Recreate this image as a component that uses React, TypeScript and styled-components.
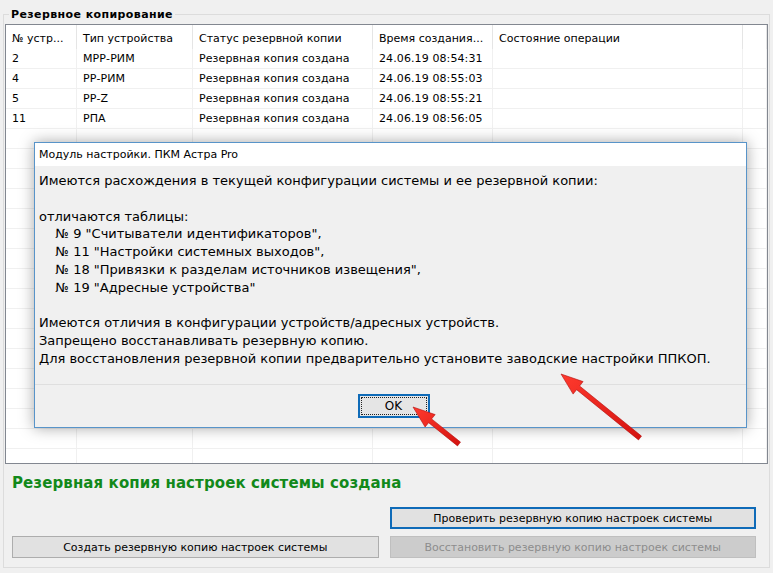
import React from 'react';
import styled, { createGlobalStyle } from 'styled-components';

const GlobalStyle = createGlobalStyle`
  html, body {
    margin: 0;
    padding: 0;
    background: #f0f0f0;
  }
  body {
    font-family: "DejaVu Sans", Tahoma, sans-serif;
    font-size: 11px;
    color: #000;
  }
`;

const Page = styled.div`
  position: relative;
  width: 773px;
  height: 573px;
  box-sizing: border-box;
  padding: 8px 3px 5px 3px;
  overflow: hidden;
`;

const GroupBox = styled.fieldset`
  margin: 0;
  height: 100%;
  box-sizing: border-box;
  border: 1px solid #dcdcdc;
  padding: 0 1px 9px 1px;
  display: flex;
  flex-direction: column;
`;

const Legend = styled.legend`
  padding: 0 2px;
  margin-left: 4px;
  font-weight: bold;
  font-size: 11px;
  line-height: 13px;
  letter-spacing: 0.4px;
`;

const Table = styled.div`
  margin-top: 3px;
  height: 440px;
  border: 1px solid #828790;
  background: #fff;
  overflow: hidden;
`;

const columns = '71px 116px 180px 120px 250px 1fr';

const HeaderRow = styled.div`
  display: grid;
  grid-template-columns: ${columns};
  height: 24px;
  align-items: center;
`;

const HeaderCell = styled.div`
  height: 100%;
  display: flex;
  align-items: center;
  padding: 2px 0 0 6px;
  box-sizing: border-box;
  border-right: 1px solid #e5e5e5;
  white-space: nowrap;
  overflow: hidden;
`;

const Row = styled.div`
  display: grid;
  grid-template-columns: ${columns};
  height: 20px;
  border-bottom: 1px solid #f0f0f0;
  box-sizing: border-box;
`;

const Cell = styled.div`
  display: flex;
  align-items: center;
  padding-left: 6px;
  border-right: 1px solid #f0f0f0;
  white-space: nowrap;
  overflow: hidden;
  letter-spacing: 0.1px;
`;

const Status = styled.div`
  margin: 10px 0 0 7px;
  height: 18px;
  line-height: 18px;
  font-size: 15px;
  font-weight: bold;
  letter-spacing: 0.1px;
  color: #12891a;
`;

const Buttons = styled.div`
  margin-top: 15px;
  padding: 0 12px 0 7px;
  display: grid;
  grid-template-columns: 1fr 1fr;
  column-gap: 11px;
  row-gap: 7px;
`;

const Button = styled.button<{ $focused?: boolean }>`
  height: 22px;
  margin: 0;
  padding: 0;
  font-family: "DejaVu Sans", Tahoma, sans-serif;
  font-size: 11px;
  color: #000;
  background: #e1e1e1;
  border: ${(p) => (p.$focused ? '2px solid #0f6bb8' : '1px solid #adadad')};
  &:disabled {
    color: #8d8d8d;
    background: #cccccc;
    border-color: #bfbfbf;
  }
`;

const Dialog = styled.div`
  position: absolute;
  left: 34px;
  top: 142px;
  width: 713px;
  height: 286px;
  box-sizing: border-box;
  border: 1px solid #5894c9;
  background: #f0f0f0;
  box-shadow: 0 0 14px rgba(0, 0, 0, 0.35);
  display: flex;
  flex-direction: column;
`;

const TitleBar = styled.div`
  height: 23px;
  background: #fff;
  padding-left: 4px;
  display: flex;
  align-items: center;
  font-size: 11px;
`;

const Message = styled.div`
  flex: 1;
  padding: 6px 0 0 4px;
  font-size: 13px;
  line-height: 17.75px;
  white-space: pre;
`;

const Footer = styled.div`
  height: 42px;
  border-top: 1px solid #dfdfdf;
  display: flex;
  align-items: center;
  justify-content: center;
  padding-left: 6px;
`;

const OkButton = styled.button`
  width: 72px;
  height: 24px;
  margin: 0;
  padding: 0;
  background: #e5e5e5;
  border: 2px solid #0f6bb8;
  outline: 1px dotted #222;
  outline-offset: -4px;
  font-family: "DejaVu Sans", Tahoma, sans-serif;
  font-size: 12px;
  color: #000;
`;

const Overlay = styled.svg`
  position: absolute;
  left: 0;
  top: 0;
  pointer-events: none;
`;

const headers = ['№ устр...', 'Тип устройства', 'Статус резервной копии', 'Время создания...', 'Состояние операции', ''];

const rows = [
  ['2', 'МРР-РИМ', 'Резервная копия создана', '24.06.19 08:54:31'],
  ['4', 'РР-РИМ', 'Резервная копия создана', '24.06.19 08:55:03'],
  ['5', 'РР-Z', 'Резервная копия создана', '24.06.19 08:55:21'],
  ['11', 'РПА', 'Резервная копия создана', '24.06.19 08:56:05'],
];

const message = [
  'Имеются расхождения в текущей конфигурации системы и ее резервной копии:',
  '',
  'отличаются таблицы:',
  '    № 9 "Считыватели идентификаторов",',
  '    № 11 "Настройки системных выходов",',
  '    № 18 "Привязки к разделам источников извещения",',
  '    № 19 "Адресные устройства"',
  '',
  'Имеются отличия в конфигурации устройств/адресных устройств.',
  'Запрещено восстанавливать резервную копию.',
  'Для восстановления резервной копии предварительно установите заводские настройки ППКОП.',
].join('\n');

const Arrow: React.FC<{ tip: [number, number]; tail: [number, number] }> = ({ tip, tail }) => {
  const dx = tip[0] - tail[0];
  const dy = tip[1] - tail[1];
  const len = Math.hypot(dx, dy);
  const ux = dx / len;
  const uy = dy / len;
  const nx = -uy;
  const ny = ux;
  const head = 22;
  const hw = 8;
  const sw = 2.4;
  const bx = tip[0] - ux * head;
  const by = tip[1] - uy * head;
  const pts = [
    [tail[0] + nx * sw, tail[1] + ny * sw],
    [bx + nx * sw, by + ny * sw],
    [bx + nx * hw, by + ny * hw],
    [tip[0], tip[1]],
    [bx - nx * hw, by - ny * hw],
    [bx - nx * sw, by - ny * sw],
    [tail[0] - nx * sw, tail[1] - ny * sw],
  ]
    .map((p) => p.map((v) => v.toFixed(1)).join(','))
    .join(' ');
  return <polygon points={pts} fill="url(#arrowFill)" stroke="#b01010" strokeWidth={0.6} strokeLinejoin="round" />;
};

const App: React.FC = () => {
  const empty = Array.from({ length: 18 });

  return (
    <Page>
      <GlobalStyle />
      <GroupBox>
        <Legend>Резервное копирование</Legend>
        <Table>
          <HeaderRow>
            {headers.map((h, i) => (
              <HeaderCell key={i}>{h}</HeaderCell>
            ))}
          </HeaderRow>
          {rows.map((r, i) => (
            <Row key={i}>
              {r.map((c, j) => (
                <Cell key={j}>{c}</Cell>
              ))}
              <Cell />
              <Cell />
            </Row>
          ))}
          {empty.map((_, i) => (
            <Row key={'e' + i}>
              {headers.map((_, j) => (
                <Cell key={j} />
              ))}
            </Row>
          ))}
        </Table>
        <Status>Резервная копия настроек системы создана</Status>
        <Buttons>
          <div />
          <Button $focused>Проверить резервную копию настроек системы</Button>
          <Button>Создать резервную копию настроек системы</Button>
          <Button disabled>Восстановить резервную копию настроек системы</Button>
        </Buttons>
      </GroupBox>

      <Dialog>
        <TitleBar>Модуль настройки. ПКМ Астра Pro</TitleBar>
        <Message>{message}</Message>
        <Footer>
          <OkButton>OK</OkButton>
        </Footer>
      </Dialog>

      <Overlay width={773} height={573}>
        <defs>
          <linearGradient id="arrowFill" x1="0" y1="0" x2="1" y2="1">
            <stop offset="0" stopColor="#ff3a2e" />
            <stop offset="1" stopColor="#d4120f" />
          </linearGradient>
        </defs>
        <Arrow tip={[413, 407]} tail={[459, 444]} />
        <Arrow tip={[561, 374]} tail={[640, 438]} />
      </Overlay>
    </Page>
  );
};

export default App;
